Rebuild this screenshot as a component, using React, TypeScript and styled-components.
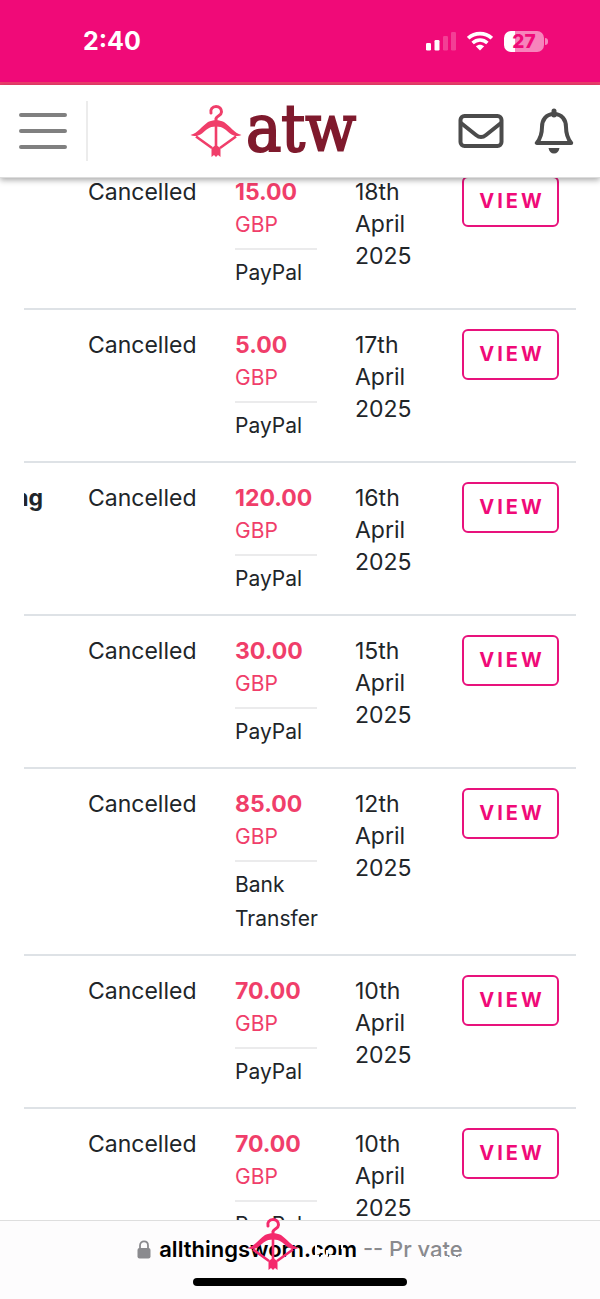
import React from "react";
import styled, { createGlobalStyle } from "styled-components";

const Global = createGlobalStyle`
  * { box-sizing: border-box; }
  html, body, #root { height: 100%; }
  body { margin: 0; background: #fff; color: #212529; font-family: Inter, "Liberation Sans", sans-serif; }
`;

const Page = styled.div`
  height: 100vh;
  display: flex;
  flex-direction: column;
  overflow: hidden;
`;

const StatusBar = styled.div`
  flex: none;
  height: 85px;
  padding: 0 56px 0 83px;
  display: flex;
  align-items: center;
  justify-content: space-between;
  background: #f00a78;
  border-bottom: 3px solid #ee3d6d;
  color: #fff;
`;

const Clock = styled.time`
  font-size: 25px;
  line-height: 30px;
  font-weight: 700;
`;

const StatusIcons = styled.div`
  display: flex;
  align-items: center;
  gap: 11px;
  svg { display: block; }
`;

const Battery = styled.div`
  position: relative;
  width: 40px;
  height: 21px;
  border-radius: 7px;
  background: linear-gradient(to right, #fff 11px, #f785bc 11px);
  color: #f00a78;
  font-size: 19px;
  line-height: 21px;
  font-weight: 800;
  text-align: center;
  &::after {
    content: "";
    position: absolute;
    left: 41px;
    top: 7px;
    width: 3px;
    height: 7px;
    border-radius: 0 3px 3px 0;
    background: #f785bc;
  }
`;

const Header = styled.header`
  flex: none;
  position: relative;
  z-index: 2;
  height: 93px;
  padding: 0 26px 0 19px;
  display: flex;
  justify-content: space-between;
  align-items: center;
  background: #fff;
  border-bottom: 1px solid #dcdcdc;
  box-shadow: 0 2px 6px rgba(0, 0, 0, 0.35);
`;

const MenuArea = styled.div`
  width: 69px;
  height: 60px;
  display: flex;
  align-items: center;
  border-right: 2px solid #ececec;
`;

const IconButton = styled.button`
  display: block;
  padding: 0;
  border: 0;
  background: none;
  color: #4b4b4b;
  svg { display: block; }
`;

const Actions = styled.div`
  display: flex;
  align-items: center;
  justify-content: flex-end;
  gap: 30px;
`;

const Logo = styled.a`
  display: flex;
  align-items: center;
  gap: 4px;
  text-decoration: none;
`;

const Wordmark = styled.span`
  padding-bottom: 4px;
  color: #7f1a2d;
  font-family: "DejaVu Serif Condensed", "DejaVu Serif", serif;
  font-size: 66px;
  line-height: 60px;
  -webkit-text-stroke: 2px #7f1a2d;
`;

const Content = styled.main`
  flex: 1;
  min-height: 0;
  overflow: hidden;
  padding: 0 24px;
`;

const TableScroller = styled.div`
  height: 100%;
  overflow: hidden;
  display: flex;
  justify-content: flex-end;
  align-items: flex-start;
`;

const Orders = styled.table`
  flex: none;
  width: calc(100% + 100px);
  margin-top: -21px;
  border-collapse: collapse;
  table-layout: fixed;
`;

const Cell = styled.td`
  padding: 19px 16px 18px;
  vertical-align: top;
  border-bottom: 2px solid #dee2e6;
  font-size: 23px;
  line-height: 32px;
`;

const ItemCell = styled(Cell)`
  padding-left: 0;
  padding-right: 29px;
  font-weight: 700;
  text-align: right;
  white-space: nowrap;
`;

const AmountCell = styled(Cell)`
  padding-right: 22px;
`;

const Amount = styled.div`
  color: #f03e6a;
  font-size: 23px;
  line-height: 32px;
  font-weight: 700;
`;

const Currency = styled.div`
  color: #f03e6a;
  font-size: 21px;
  line-height: 34px;
`;

const Method = styled.div`
  margin-top: 6px;
  padding-top: 6px;
  border-top: 2px solid #ebebec;
  font-size: 21px;
  line-height: 34px;
`;

const ViewButton = styled.button`
  display: block;
  width: 97px;
  height: 51px;
  padding: 0 0 1px 3px;
  border: 2px solid #e8127c;
  border-radius: 6px;
  background: #fff;
  color: #f00a78;
  font-family: inherit;
  font-size: 20px;
  line-height: 24px;
  font-weight: 700;
  letter-spacing: 3px;
`;

const BrowserBar = styled.footer`
  flex: none;
  position: relative;
  z-index: 3;
  height: 79px;
  border-top: 1px solid #dedede;
  background: #fdfcfd;
  display: flex;
  flex-direction: column;
  align-items: center;
  justify-content: space-between;
  padding: 13px 0;
`;

const Address = styled.div`
  display: flex;
  align-items: center;
  gap: 8px;
  color: #8a8a8e;
  font-size: 22px;
  line-height: 30px;
  font-weight: 500;
  strong { color: #000; font-weight: 600; }
  svg { display: block; }
`;

const HomeIndicator = styled.div`
  width: 214px;
  height: 8px;
  border-radius: 4px;
  background: #000;
`;

const FloatingLogo = styled.div`
  position: absolute;
  left: 50%;
  top: -4px;
  margin-left: -53px;
  display: flex;
  pointer-events: none;
`;

function Hanger({ color }: { color: string }) {
  return (
    <svg width="52" height="54" viewBox="0 0 52 54" fill="none" aria-hidden="true">
      <path d="M21 9C20 5.500 22.500 2.500 26 2.500C29.500 2.500 31.500 5 31.500 8C31.500 11.500 27 11.500 26 14.500V18" stroke={color} strokeWidth="3" strokeLinecap="round" />
      <path d="M0.500 31C8 29 12 22 18 18C23 15.500 29 15.500 34 18C40 22 44 29 51.500 31C48 33 43 32 40 29.500C36 26 33 22.500 26 22.500C19 22.500 16 26 12 29.500C9 32 4 33 0.500 31Z" fill={color} />
      <path d="M26 22V44M6 32.500L22 44M46 32.500L30 44" stroke={color} strokeWidth="2.600" />
      <path d="M26 41L30.500 44V53L28 51L26 53L24 51L21.500 53V44Z" fill={color} />
    </svg>
  );
}

/* Pale flecks trailing the floating logo across the address */
function Flecks() {
  return (
    <svg width="170" height="54" viewBox="0 0 170 54" fill="none" stroke="#fdfcfd" aria-hidden="true">
      <path d="M14 39H46M92 40H101M119 40H160" strokeWidth="2" strokeDasharray="6 2" />
      <path d="M17 26V39M28 33V39M43 27V32" strokeWidth="2" />
      <path d="M115.500 20V41" strokeWidth="5" />
      <path d="M143 33H151" strokeWidth="2" />
    </svg>
  );
}

const orders = [
  { item: "", amount: "15.00", method: "PayPal", date: "18th April 2025" },
  { item: "", amount: "5.00", method: "PayPal", date: "17th April 2025" },
  { item: "ng", amount: "120.00", method: "PayPal", date: "16th April 2025" },
  { item: "", amount: "30.00", method: "PayPal", date: "15th April 2025" },
  { item: "", amount: "85.00", method: "Bank Transfer", date: "12th April 2025" },
  { item: "", amount: "70.00", method: "PayPal", date: "10th April 2025" },
  { item: "", amount: "70.00", method: "PayPal", date: "10th April 2025" },
];

export default function App() {
  return (
    <Page>
      <Global />
      <StatusBar>
        <Clock>2:40</Clock>
        <StatusIcons>
          <svg width="30" height="20" viewBox="0 0 30 20" fill="#fff" aria-label="Signal">
            <rect x="0" y="12" width="5" height="7.500" rx="1.200" />
            <rect x="8.500" y="9" width="5" height="10.500" rx="1.200" />
            <rect x="17" y="5" width="5" height="14.500" rx="1.200" opacity=".22" />
            <rect x="25" y="1" width="5" height="18.500" rx="1.200" opacity=".22" />
          </svg>
          <svg width="26" height="20" viewBox="0 0 26 20" aria-label="Wi-Fi">
            <path d="M1.200 7.200C8 1 18 1 24.800 7.200" fill="none" stroke="#fff" strokeWidth="3.800" />
            <path d="M5.600 12C10 8 16 8 20.400 12" fill="none" stroke="#fff" strokeWidth="3.600" />
            <path d="M13 19.500L8.800 15.300C11.200 13.200 14.800 13.200 17.200 15.300Z" fill="#fff" />
          </svg>
          <Battery>27</Battery>
        </StatusIcons>
      </StatusBar>
      <Header>
        <MenuArea>
          <IconButton aria-label="Menu">
            <svg width="48" height="38" viewBox="0 0 48 38" stroke="#808080" strokeWidth="4" strokeLinecap="round">
              <path d="M2 3H46M2 19H46M2 35H46" />
            </svg>
          </IconButton>
        </MenuArea>
        <Logo href="#" aria-label="atw home">
          <Hanger color="#f03e6a" />
          <Wordmark>atw</Wordmark>
        </Logo>
        <Actions>
          <IconButton aria-label="Messages">
            <svg width="46" height="36" viewBox="0 0 46 36" fill="none" stroke="currentColor" strokeWidth="4">
              <rect x="2.500" y="3" width="41" height="30" rx="4" />
              <path d="M3 10L18 22Q23 26 28 22L43 10" />
            </svg>
          </IconButton>
          <IconButton aria-label="Notifications">
            <svg width="40" height="46" viewBox="0 0 40 46" fill="none" stroke="currentColor" strokeWidth="4" strokeLinejoin="round">
              <path d="M20 6C12 6 8 12 8 19C8 27 6 31 2.800 35H37.200C34 31 32 27 32 19C32 12 28 6 20 6Z" />
              <path d="M20 3V7" strokeLinecap="round" strokeWidth="5" />
              <path d="M14.500 40H25.500C25 43.500 23 45.500 20 45.500C17 45.500 15 43.500 14.500 40Z" fill="currentColor" stroke="none" />
            </svg>
          </IconButton>
        </Actions>
      </Header>
      <Content>
        <TableScroller>
          <Orders>
            <colgroup>
              <col />
              <col style={{ width: 147 }} />
              <col style={{ width: 120 }} />
              <col style={{ width: 107 }} />
              <col style={{ width: 130 }} />
            </colgroup>
            <tbody>
              {orders.map((o, i) => (
                <tr key={i}>
                  <ItemCell>{o.item}</ItemCell>
                  <Cell>Cancelled</Cell>
                  <AmountCell>
                    <Amount>{o.amount}</Amount>
                    <Currency>GBP</Currency>
                    <Method>{o.method}</Method>
                  </AmountCell>
                  <Cell>{o.date}</Cell>
                  <Cell><ViewButton>VIEW</ViewButton></Cell>
                </tr>
              ))}
            </tbody>
          </Orders>
        </TableScroller>
      </Content>
      <BrowserBar>
        <Address>
          <svg width="14" height="19" viewBox="0 0 14 19" aria-label="Secure">
            <rect x="0.500" y="8" width="13" height="10.500" rx="2" fill="#8a8a8e" />
            <path d="M3 9V5.500C3 0 11 0 11 5.500V9" fill="none" stroke="#8a8a8e" strokeWidth="1.800" />
          </svg>
          <span><strong>allthingsworn.com</strong> -- Private</span>
        </Address>
        <HomeIndicator />
        <FloatingLogo>
          <Hanger color="#f42a6d" />
          <Flecks />
        </FloatingLogo>
      </BrowserBar>
    </Page>
  );
}
